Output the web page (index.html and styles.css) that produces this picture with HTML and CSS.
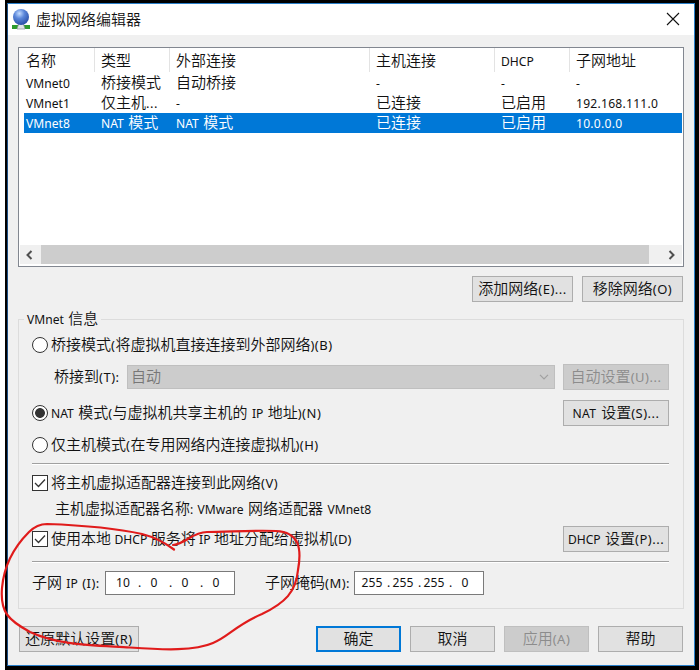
FILE: index.html
```
<!DOCTYPE html>
<html lang="zh-CN">
<head>
<meta charset="utf-8">
<title>虚拟网络编辑器</title>
<link rel="stylesheet" href="styles.css">
</head>
<body>
<div class="desktop">
  <div class="window">
    <header class="titlebar">
      <svg class="app-icon" width="20" height="22" viewBox="0 0 20 22">
        <defs><radialGradient id="globe" cx="40%" cy="28%" r="70%"><stop offset="0" stop-color="#c4dcff"/><stop offset=".45" stop-color="#5b87da"/><stop offset="1" stop-color="#2c52aa"/></radialGradient></defs>
        <rect x="1" y="17" width="18" height="4" fill="#2d9a2d"/>
        <path d="M8 15h4l2 6H6z" fill="#dfe3e6" stroke="#8b9499" stroke-width=".7"/>
        <circle cx="10" cy="9" r="8" fill="url(#globe)"/>
      </svg>
      <span class="title">虚拟网络编辑器</span>
      <svg class="close" width="14" height="14" viewBox="0 0 14 14"><path d="M1 1l12 12M13 1L1 13" stroke="#111" stroke-width="1.100" fill="none"/></svg>
    </header>
    <main class="body">
      <section class="list">
        <div class="row head"><span>名称</span><span>类型</span><span>外部连接</span><span>主机连接</span><span><i class="l">DHCP</i></span><span>子网地址</span></div>
        <div class="row"><span><i class="l">VMnet0</i></span><span>桥接模式</span><span>自动桥接</span><span><i class="l">-</i></span><span><i class="l">-</i></span><span><i class="l">-</i></span></div>
        <div class="row"><span><i class="l">VMnet1</i></span><span>仅主机<i class="l p">...</i></span><span><i class="l">-</i></span><span>已连接</span><span>已启用</span><span><i class="l addr">192.168.111.0</i></span></div>
        <div class="row selected"><span><i class="l">VMnet8</i></span><span><i class="l">NAT&nbsp;</i>模式</span><span><i class="l">NAT&nbsp;</i>模式</span><span>已连接</span><span>已启用</span><span><i class="l addr">10.0.0.0</i></span></div>
        <div class="scrollbar">
          <svg width="8" height="10" viewBox="0 0 8 10"><path d="M6.500 1L2.500 5l4 4" fill="none" stroke="#505050" stroke-width="2"/></svg>
          <div class="thumb"></div>
          <svg width="8" height="10" viewBox="0 0 8 10"><path d="M1.500 1l4 4-4 4" fill="none" stroke="#505050" stroke-width="2"/></svg>
        </div>
      </section>
      <div class="list-actions">
        <button class="btn net">添加网络<i class="l p">(E)...</i></button>
        <button class="btn net">移除网络<i class="l p">(O)</i></button>
      </div>
      <fieldset class="group">
        <legend><i class="l">VMnet&nbsp;</i>信息</legend>
        <div class="line r1"><span class="radio"></span><span class="t">桥接模式<i class="l p">(</i>将虚拟机直接连接到外部网络<i class="l p">)(B)</i></span></div>
        <div class="line r2"><span class="t bridge-label">桥接到<i class="l p">(T):</i></span>
          <div class="combo"><span class="t">自动</span><svg width="10" height="6" viewBox="0 0 10 6"><path d="M1 .8l4 4 4-4" fill="none" stroke="#a0a0a0" stroke-width="1.200"/></svg></div>
          <button class="btn side disabled">自动设置<i class="l p">(U)...</i></button></div>
        <div class="line r3"><span class="radio on"></span><span class="t"><i class="l">NAT&nbsp;</i>模式<i class="l p">(</i>与虚拟机共享主机的<i class="l">&nbsp;IP&nbsp;</i>地址<i class="l p">)(N)</i></span><button class="btn side push"><i class="l nat">NAT&nbsp;</i>设置<i class="l p">(S)...</i></button></div>
        <div class="line r4"><span class="radio"></span><span class="t">仅主机模式<i class="l p">(</i>在专用网络内连接虚拟机<i class="l p">)(H)</i></span></div>
        <div class="rule first"></div>
        <div class="line r5"><span class="check"><svg width="14" height="14" viewBox="0 0 14 14"><path d="M2 7l3.500 3.500L12 3.500" fill="none" stroke="#333" stroke-width="1.300"/></svg></span><span class="t">将主机虚拟适配器连接到此网络<i class="l p">(V)</i></span></div>
        <div class="line r6"><span class="t">主机虚拟适配器名称<i class="l">:&nbsp;VMware&nbsp;</i>网络适配器<i class="l">&nbsp;VMnet8</i></span></div>
        <div class="line r7"><span class="check"><svg width="14" height="14" viewBox="0 0 14 14"><path d="M2 7l3.500 3.500L12 3.500" fill="none" stroke="#333" stroke-width="1.300"/></svg></span><span class="t tight">使用本地<i class="l">&nbsp;DHCP&nbsp;</i>服务将<i class="l">&nbsp;IP&nbsp;</i>地址分配给虚拟机<i class="l p">(D)</i></span><button class="btn side push"><i class="l">DHCP&nbsp;</i>设置<i class="l p">(P)...</i></button></div>
        <div class="rule second"></div>
        <div class="line r8"><span class="t ip-label">子网<i class="l">&nbsp;IP&nbsp;</i><i class="l p">(I):</i></span>
          <div class="ip"><b>10</b><u>.</u><b>0</b><u>.</u><b>0</b><u>.</u><b>0</b></div>
          <span class="t mask-label">子网掩码<i class="l p">(M):</i></span>
          <div class="ip"><b>255</b><u>.</u><b>255</b><u>.</u><b>255</b><u>.</u><b>0</b></div></div>
      </fieldset>
      <footer class="footer">
        <button class="btn restore">还原默认设置<i class="l p">(R)</i></button>
        <button class="btn primary">确定</button>
        <button class="btn">取消</button>
        <button class="btn disabled">应用<i class="l p">(A)</i></button>
        <button class="btn">帮助</button>
      </footer>
    </main>
  </div>
  <svg class="scribble" width="310" height="150" viewBox="0 515 310 150"><path d="M174 549.500C164 542 154 537 142 534C115 528 75 525 47 524Q37 524 29 532C15 546 4 565 2 588C0 612 8 620 30 632C58 645 90 645 130 647.500C165 650 195 651 213 643C228 637 236 625 262 614C285 603 296 592 298 570C302 548 299 532 276 531C252 530 228 532 207 532C192 532 186 544 173 545" fill="none" stroke="#e01b1b" stroke-width="2.200" stroke-linecap="round" stroke-linejoin="round"/></svg>
</div>
</body>
</html>
```
FILE: styles.css
```
* { box-sizing: border-box; }
body { margin: 0; background: #fff; font: 350 15px/20px "Noto Sans CJK SC", sans-serif; color: #111; }
.desktop { position: relative; width: 694px; height: 670px; margin-left: 5px; padding: 3px 0 0 2px; background: #000; }
.window { width: 688px; height: 663px; border: 1px solid #2a7fc9; border-left-color: #1c4f85; background: #f0f0f0; }
.titlebar { height: 31px; background: #fff; display: flex; align-items: center; padding: 0 14px 0 3px; }
.app-icon { margin-top: -1px; }
.title { margin: -2px 0 0 5px; }
.close { margin-left: auto; margin-top: -1px; }
.body { padding: 12px 10px 0; }
.l { font: 12.1px/1 "Noto Sans", sans-serif; word-spacing: 1.2px; }
.p { font-size: 13px; letter-spacing: .5px; }
.nat { letter-spacing: .4px; }
.tight .l { word-spacing: .3px; }
.tight .p { letter-spacing: 0; }
.list { display: flex; flex-direction: column; width: 666px; height: 220px; border: 1px solid #828790; background: #fff; padding: 0 1px 2px; }
.row { display: grid; grid-template-columns: 75px 75px 200px 125px 75px 1fr; height: 20px; line-height: 18px; margin-left: 4px; white-space: nowrap; }
.row span { padding-left: 2px; height: 20px; }
.row.head { height: 25px; grid-template-columns: 71px 75px 200px 125px 75px 1fr; }
.row.head span { height: 24px; line-height: 24px; border-right: 1px solid #e3e3e3; }
.row.head span + span { padding-left: 6px; }
.row.head span:last-child { border: 0; }
.selected { background: #0078d7; color: #fff; }
.addr { letter-spacing: .25px; }
.scrollbar { display: flex; align-items: center; height: 19px; margin-top: auto; background: #f0f0f0; padding: 0 7px 0 5px; }
.thumb { flex: none; height: 19px; width: 608px; margin-left: 8px; margin-right: 19px; background: #cdcdcd; }
.scrollbar svg { flex: none; }
.btn { height: 26px; width: 85px; margin: 0; padding: 0 0 2px; border: 1px solid #adadad; background: #e1e1e1; color: #111; font: 350 15px/20px "Noto Sans CJK SC", sans-serif; white-space: nowrap; }
.btn.disabled { background: #ccc; border-color: #bfbfbf; color: #8c8c8c; }
.btn.primary { border: 2px solid #0078d7; }
.list-actions { display: flex; justify-content: flex-end; gap: 9px; margin-top: 9px; padding-right: 1px; }
.btn.net { width: 101px; }
.group { margin: 7px 0 0; padding: 0; border: 1px solid #dcdcdc; width: 666px; height: 300px; }
.group legend { margin-left: 5px; padding: 0 3px; height: 20px; line-height: 18px; }
.line { display: flex; align-items: center; height: 28px; padding: 0 14px 0 13px; white-space: nowrap; }
.t { margin-top: -2px; }
.r1 { margin-top: 2px; }
.r2 { margin-top: 4px; padding-left: 35px; }
.r3 { margin-top: 8px; }
.r4 { margin-top: 4px; }
.r6 { height: 24px; padding-left: 36px; }
.r7 { margin-top: 4px; }
.radio { flex: none; width: 16px; height: 16px; border: 1px solid #333; border-radius: 50%; background: #fff; margin-right: 3px; }
.radio.on { background: radial-gradient(circle, #333 0 4.500px, #fff 5.300px); }
.check { flex: none; width: 16px; height: 16px; border: 1px solid #333; background: #fff; margin-right: 3px; display: flex; }
.bridge-label { width: 73px; }
.combo { width: 428px; height: 24px; background: #ccc; border: 1px solid #bfbfbf; color: #777; display: flex; align-items: center; justify-content: space-between; padding: 0 5px 0 3px; }
.btn.side { width: 106px; }
.combo + .btn { margin-left: 8px; }
.push { margin-left: auto; }
.rule { height: 2px; margin: 4px 14px 4px 13px; border-top: 1px solid #a0a0a0; border-bottom: 1px solid #fff; }
.rule.second { margin-top: 8px; margin-bottom: 6px; }
.ip-label { width: 73px; }
.mask-label { width: 89px; margin-left: 30px; }
.ip { width: 130px; height: 24px; border: 1px solid #7a7a7a; background: #fff; display: flex; align-items: center; padding-left: 6px; font: 12.100px/22px "Noto Sans", sans-serif; }
.ip b { font-weight: 400; width: 22px; text-align: center; }
.ip u { text-decoration: none; width: 9px; padding-left: 2px; text-align: center; }
.footer { display: flex; gap: 9px; margin-top: 17px; padding: 0 1px; }
.restore { width: 120px; margin-right: auto; }
.scribble { position: absolute; left: -5px; top: 515px; }
```
